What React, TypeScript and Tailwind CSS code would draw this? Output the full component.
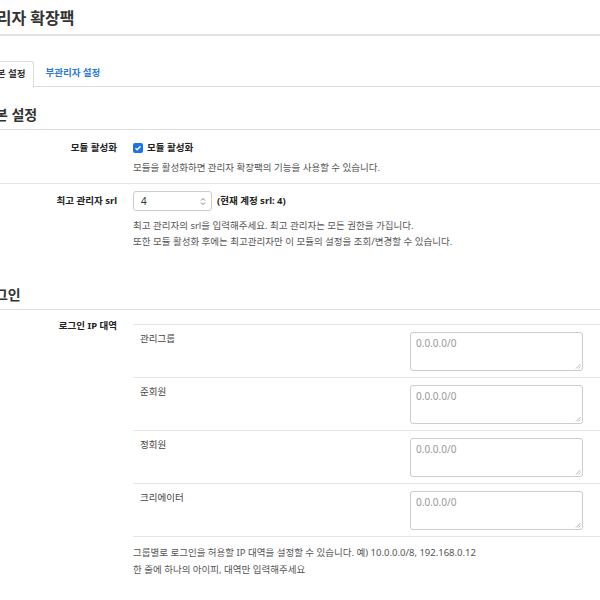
import React from "react";

const Label = ({ children }: { children: React.ReactNode }) => (
  <div className="w-[135px] shrink-0 text-right text-[9.5px] font-bold leading-[14px] text-[#222]">{children}</div>
);

const groups = ["관리그룹", "준회원", "정회원", "크리에이터"];

export default function App() {
  return (
    <div className="w-[600px] h-[600px] overflow-hidden bg-white text-[#333] font-['Noto_Sans','Noto_Sans_CJK_KR',sans-serif]">
      <div className="ml-[-18px] w-[640px]">
        <h1 className="h-[36px] pt-[6px] text-[16px] font-bold leading-[24px] text-[#333] border-b-2 border-[#e3e3e3]">
          관리자 확장팩
        </h1>

        <div className="mt-[25px] flex h-[26px] border-b border-[#ddd]">
          <div className="ml-[-3px] h-[26px] px-[8px] bg-white border border-b-0 border-[#ddd] rounded-t-[3px] text-[9.5px] font-bold leading-[24px] text-[#333]">
            기본 설정
          </div>
          <div className="px-[11px] text-[9.5px] font-bold leading-[24px] text-[#2a7ad8]">부관리자 설정</div>
        </div>

        <h2 className="mt-[18px] pb-[4px] text-[14px] font-bold leading-[20px] text-[#333] border-b border-[#ddd]">
          기본 설정
        </h2>

        <div className="flex gap-[16px] pt-[11px] pb-[8px] border-b border-[#e5e5e5]">
          <Label>모듈 활성화</Label>
          <div className="flex flex-col gap-[6px]">
            <div className="flex items-center gap-[4px] h-[14px]">
              <span className="flex h-[10px] w-[10px] items-center justify-center rounded-[2px] bg-[#1a73e8]">
                <svg width="8" height="8" viewBox="0 0 8 8">
                  <path d="M1.5 4.2 L3.2 5.8 L6.5 2.2" stroke="white" strokeWidth="1.4" fill="none" />
                </svg>
              </span>
              <span className="text-[9.5px] font-bold leading-[14px] text-[#222]">모듈 활성화</span>
            </div>
            <div className="text-[9.5px] leading-[14px] text-[#555]">
              모듈을 활성화하면 관리자 확장팩의 기능을 사용할 수 있습니다.
            </div>
          </div>
        </div>

        <div className="flex gap-[16px] pt-[7px]">
          <div className="pt-[3px]">
            <Label>최고 관리자 srl</Label>
          </div>
          <div className="flex flex-col">
            <div className="flex items-center">
              <div className="flex h-[20px] w-[79px] items-center justify-between rounded-[3px] border border-[#ccc] pl-[7px] pr-[5px] text-[10px] text-[#333]">
                <span>4</span>
                <svg width="6" height="9" viewBox="0 0 6 9">
                  <path d="M1 3.5 L3 1.5 L5 3.5" stroke="#777" strokeWidth="0.9" fill="none" />
                  <path d="M1 5.5 L3 7.5 L5 5.5" stroke="#777" strokeWidth="0.9" fill="none" />
                </svg>
              </div>
              <span className="ml-[5px] text-[9.5px] font-bold leading-[14px] text-[#222]">(현재 계정 srl: 4)</span>
            </div>
            <div className="mt-[7px] text-[9.5px] leading-[16px] text-[#555]">
              <div>최고 관리자의 srl을 입력해주세요. 최고 관리자는 모든 권한을 가집니다.</div>
              <div>또한 모듈 활성화 후에는 최고관리자만 이 모듈의 설정을 조회/변경할 수 있습니다.</div>
            </div>
          </div>
        </div>

        <h2 className="mt-[35px] pb-[4px] text-[14px] font-bold leading-[20px] text-[#333] border-b border-[#ddd]">
          로그인
        </h2>

        <div className="flex gap-[16px] pt-[9px]">
          <Label>로그인 IP 대역</Label>
          <div className="flex flex-1 flex-col pt-[5px]">
            <div className="border-b border-[#e5e5e5]">
              {groups.map((g) => (
                <div key={g} className="flex border-t border-[#e5e5e5] pt-[7px] pb-[6px]">
                  <div className="w-[277px] pl-[7px] text-[9.5px] leading-[14px] text-[#444]">{g}</div>
                  <div className="relative h-[39px] w-[173px] rounded-[3px] border border-[#ccc] px-[5px] pt-[3px] text-[10px] leading-[14px] text-[#999]">
                    0.0.0.0/0
                    <svg className="absolute right-[1px] bottom-[1px]" width="6" height="6" viewBox="0 0 6 6">
                      <path d="M5.5 1 L1 5.5 M5.5 3.5 L3.5 5.5" stroke="#999" strokeWidth="0.7" />
                    </svg>
                  </div>
                </div>
              ))}
            </div>
            <div className="mt-[7px] text-[9.5px] leading-[17px] text-[#555]">
              <div>그룹별로 로그인을 허용할 IP 대역을 설정할 수 있습니다. 예) 10.0.0.0/8, 192.168.0.12</div>
              <div>한 줄에 하나의 아이피, 대역만 입력해주세요</div>
            </div>
          </div>
        </div>
      </div>
    </div>
  );
}
